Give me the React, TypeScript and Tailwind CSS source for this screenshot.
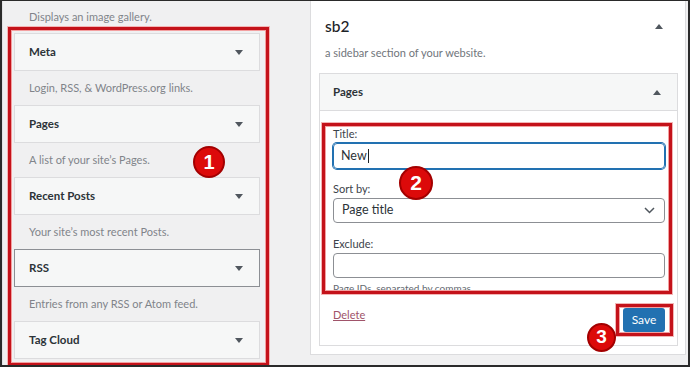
import React from "react";

const font = { fontFamily: "Lato, 'Open Sans', sans-serif" };

function DownTri() {
  return (
    <svg width="8" height="5" viewBox="0 0 8 5" className="block">
      <path d="M0 0 L8 0 L4 5 Z" fill="#50575e" />
    </svg>
  );
}
function UpTri() {
  return (
    <svg width="8" height="5" viewBox="0 0 8 5" className="block">
      <path d="M0 5 L8 5 L4 0 Z" fill="#50575e" />
    </svg>
  );
}

function WidgetBox({ title, dark }: { title: string; dark?: boolean }) {
  return (
    <div
      className={`h-[38px] w-[246px] flex items-center justify-between pl-[14px] pr-[16px] bg-[#f6f7f7] border ${
        dark ? "border-[#8c8f94]" : "border-[#dcdcde]"
      }`}
    >
      <span className="text-[11.5px] font-bold text-[#2c3338]">{title}</span>
      <DownTri />
    </div>
  );
}

function Desc({ text, h = 34 }: { text: string; h?: number }) {
  return (
    <div
      className={`${h === 34 ? "h-[34px]" : "h-[32px]"} flex items-center pl-[15px] text-[11px] text-[#80848a]`}
    >
      {text}
    </div>
  );
}

function Badge({ n, className }: { n: string; className: string }) {
  return (
    <div
      className={`absolute rounded-full bg-[#dc0a0a] border-2 border-[#a30000] flex items-center justify-center text-white font-bold ${className}`}
      style={{ fontFamily: "'Liberation Sans', Arial, sans-serif" }}
    >
      {n}
    </div>
  );
}

function RedRect({ className }: { className: string }) {
  return (
    <div
      className={`absolute border-[3px] border-[#c4121a] shadow-[inset_0_0_0_1px_#f3a0a0,0_0_0_1px_#f3b5b5] pointer-events-none ${className}`}
    />
  );
}

export default function App() {
  return (
    <div
      className="relative w-[690px] h-[367px] box-border border-t border-l-2 border-r-2 border-b-2 border-[#2a2a2a] bg-[#f0f0f1] overflow-hidden flex"
      style={font}
    >
      {/* Left column */}
      <div className="w-[308px] shrink-0 pl-[11px] border-l border-[#e2e2e4]">
        <Desc text="Displays an image gallery." h={32} />
        <WidgetBox title="Meta" />
        <Desc text="Login, RSS, & WordPress.org links." />
        <WidgetBox title="Pages" />
        <Desc text="A list of your site’s Pages." />
        <WidgetBox title="Recent Posts" />
        <Desc text="Your site’s most recent Posts." />
        <WidgetBox title="RSS" dark />
        <Desc text="Entries from any RSS or Atom feed." />
        <WidgetBox title="Tag Cloud" />
      </div>

      {/* Right panel */}
      <div className="w-[376px] h-[354px] shrink-0 bg-white border-x border-b border-[#dcdcde] flex flex-col">
        <div className="flex items-center justify-between pl-[14px] pr-[22px] pt-[13px]">
          <span className="text-[15.5px] leading-[24px] font-medium text-[#1d2327]">sb2</span>
          <UpTri />
        </div>
        <div className="pl-[14px] mt-[5px] text-[11px] leading-[20px] text-[#70757b]">
          a sidebar section of your website.
        </div>
        <div className="ml-[8px] mr-[7px] mt-[10px] h-[273px] border border-[#dcdcde] flex flex-col">
          <div className="h-[37px] shrink-0 bg-[#f6f7f7] border-b border-[#dcdcde] flex items-center justify-between pl-[13px] pr-[16px]">
            <span className="text-[11.5px] font-bold text-[#2c3338]">Pages</span>
            <UpTri />
          </div>
          <div className="px-[13px] pr-[12px] pt-[14px] flex flex-col">
            <div className="text-[11px] leading-[18px] text-[#3c434a]">Title:</div>
            <div className="h-[26px] rounded-[4px] border border-[#2271b1] shadow-[0_0_0_1px_#2271b1] flex items-center pl-[7px] text-[12.5px] text-[#2c3338]">
              New<span className="inline-block w-px h-[14px] bg-[#1d2327] ml-px" />
            </div>
            <div className="mt-[11px] text-[11px] leading-[18px] text-[#3c434a]">Sort by:</div>
            <div className="h-[25px] rounded-[4px] border border-[#8c8f94] flex items-center justify-between pl-[8px] pr-[9px] text-[12.5px] text-[#2c3338]">
              <span>Page title</span>
              <svg width="11" height="7" viewBox="0 0 11 7">
                <path d="M1 1 L5.5 5.5 L10 1" fill="none" stroke="#50575e" strokeWidth="1.5" />
              </svg>
            </div>
            <div className="mt-[12px] text-[11px] leading-[18px] text-[#3c434a]">Exclude:</div>
            <div className="h-[25px] rounded-[4px] border border-[#8c8f94]" />
            <div className="mt-[2px] text-[10px] leading-[16px] text-[#646970]">
              Page IDs, separated by commas.
            </div>
            <div className="mt-[12px] flex items-start justify-between">
              <span className="text-[11px] leading-[14px] underline text-[#a0546a]">Delete</span>
              <div className="h-[24px] w-[42px] rounded-[3px] bg-[#2271b1] flex items-center justify-center text-[12px] text-white">
                Save
              </div>
            </div>
          </div>
        </div>
      </div>

      {/* Annotations */}
      <RedRect className="left-[6px] top-[26px] w-[261px] h-[339px]" />
      <RedRect className="left-[320px] top-[122px] w-[350px] h-[171px]" />
      <RedRect className="left-[614px] top-[303px] w-[57px] h-[32px]" />
      <Badge n="1" className="left-[191px] top-[145px] w-[32px] h-[32px] text-[20px]" />
      <Badge n="2" className="left-[397px] top-[165px] w-[34px] h-[34px] text-[21px]" />
      <Badge n="3" className="left-[585px] top-[322px] w-[29px] h-[29px] text-[19px]" />
    </div>
  );
}
